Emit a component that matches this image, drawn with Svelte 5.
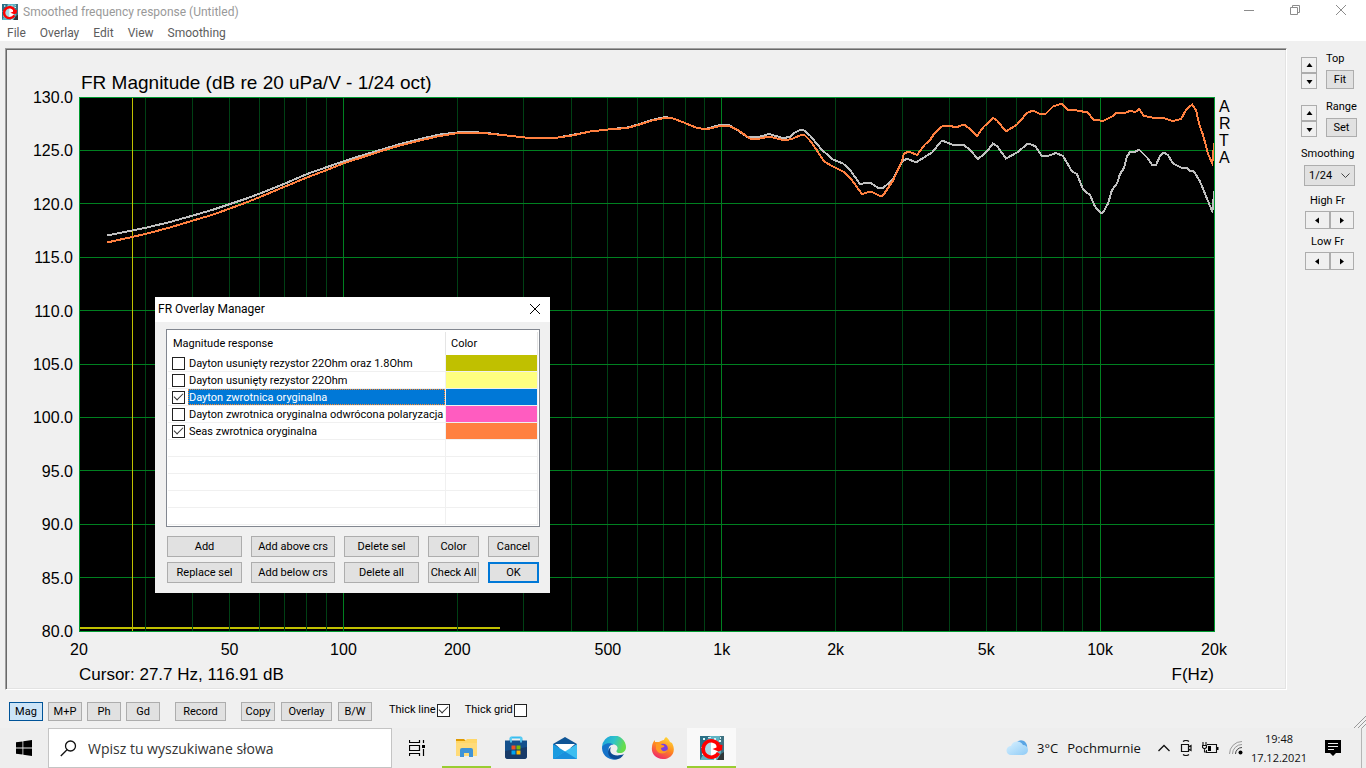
<script>
  const F_MIN = 20;
  const F_MAX = 20000;
  const span = Math.log10(F_MAX / F_MIN);
  const fx = (f) => `${(Math.log10(f / F_MIN) / span) * 100}%`;

  const minorFreqs = [30, 40, 50, 60, 70, 80, 90, 200, 300, 400, 500, 600, 700, 800, 900,
    2000, 3000, 4000, 5000, 6000, 7000, 8000, 9000];
  const majorFreqs = [100, 1000, 10000];
  const levels = [130, 125, 120, 115, 110, 105, 100, 95, 90, 85, 80];
  const ly = (v) => `${((130 - v) / 50) * 100}%`;
  const freqLabels = [[20, '20'], [50, '50'], [100, '100'], [200, '200'], [500, '500'],
    [1000, '1k'], [2000, '2k'], [5000, '5k'], [10000, '10k'], [20000, '20k']];

  const dayton = '107,235.5 132,230.5 147,227.5 170,222 193,215.5 212,210 230,204 245,199 260,193.5 285,183.5 307,174 327,167 343,161.5 360,156 377,151 400,144 420,139 440,134.5 457,132.5 470,132 487,133 507,135.5 525,137.5 540,138 555,138 572,135 590,131.5 608,129.5 627,127.5 638,124.5 652,120 665,117 673,118.5 685,123 697,128 705,129 713,127 721,124.5 730,125.5 738,130.5 747,137 757,137.5 769,134 783,138 790,137 795,132.5 800,130 804,130.5 810,135.5 822,150 833,159.5 843,163.5 850,170 860,184 870,182.5 878,188 883,188 893,179.5 902,161.5 907,158.5 916,162.5 932,152.5 941,141.5 943,141 952,144.5 964,145 970,150 978,159 987,151.5 993,143.5 997,146 1006,158.5 1017,152.5 1028,143.5 1035,146 1042,156 1046,156.5 1056,153 1063,156 1072,171.5 1077,174 1083,189.5 1090,195 1095,206.5 1101,213.5 1103,212.5 1108,203.5 1112,190 1117,183.5 1120,174 1124,168 1127,156.5 1130,152 1135,152 1139,149.5 1148,158.5 1152,165 1156,165 1160,156 1164,152.5 1168,155 1173,163.5 1181,167.5 1187,168 1190,171 1194,171.5 1200,181.5 1207,198.5 1212,211 1213,208 1214,191';
  const seas = '107,242.5 132,237 147,233.5 170,227.5 193,220.5 212,215 230,208.5 245,203 260,197 285,186.5 307,177.5 327,170 343,163.5 360,158 380,151.5 400,145.5 420,140.5 437,136.5 458,133 483,133 507,135.5 530,138 555,138 572,135.5 590,131.5 608,129.5 627,128 638,125 652,120.5 665,118 673,118.5 685,123 697,128 705,129 710,128.5 720,126 730,126.5 737,129.5 750,138.5 760,138.5 769,136.5 785,140.5 793,138.5 802,134.5 805,135.5 810,140.5 817,150.5 824,161.5 833,166.5 843,171.5 850,177.5 862,194 871,191.5 880,196 883,195.5 893,180.5 902,161 904,153.5 909,151.5 917,155 925,144.5 930,140 935,132.5 942,126.5 948,126 957,127 964,124.5 970,129 977,136 983,127.5 993,118 997,120.5 1006,131.5 1017,124.5 1027,113 1033,110.5 1040,114 1046,113.5 1053,106.5 1062,103.5 1068,110 1077,110.5 1088,112.5 1093,119.5 1103,121 1112,116.5 1117,112.5 1125,113 1131,110.5 1135,112.5 1139,109 1144,116 1152,117.5 1163,118 1173,121 1181,119 1186,110 1192,104.5 1196,110 1199,123.5 1203,135 1208,153.5 1212,163 1213,158 1214,143';

  let rows = $state([
    { name: 'Dayton usunięty rezystor 22Ohm oraz 1.8Ohm', color: '#c0c000', on: false },
    { name: 'Dayton usunięty rezystor 22Ohm', color: '#ffff80', on: false },
    { name: 'Dayton zwrotnica oryginalna', color: '#0078d7', on: true },
    { name: 'Dayton zwrotnica oryginalna odwrócona polaryzacja', color: '#ff5cc0', on: false },
    { name: 'Seas zwrotnica oryginalna', color: '#ff8040', on: true }
  ]);
  let selected = $state(2);
  let thickLine = $state(true);
  let thickGrid = $state(false);
  const menus = ['File', 'Overlay', 'Edit', 'View', 'Smoothing'];
  const modes = ['Mag', 'M+P', 'Ph', 'Gd'];
  const actions = ['Add', 'Add above crs', 'Delete sel', 'Color', 'Cancel',
    'Replace sel', 'Add below crs', 'Delete all', 'Check All', 'OK'];
</script>

{#snippet artaIcon(size)}
  <svg width={size} height={size} viewBox="0 0 24 24">
    <rect width="24" height="24" fill="#5fb4c4" />
    <path d="M0 0h10L4 8l2 6-6 10z" fill="#2a6f86" />
    <path d="M20 0h4v24h-6l3-8-2-9z" fill="#3f7382" />
    <path d="M17 24l4-6 3-2v8z" fill="#303638" />
    <path d="M3 2h2v2H3zM8 1h3v1H8zM14 2h2v2h-2zM19 4h2v2h-2zM2 17h2v2H2zM20 1h1v2h-1zM1 11h2v1H1zM14 22h2v2h-2z" fill="#d5f2f6" />
    <circle cx="11" cy="13" r="7" fill="#a9d9e4" />
    <path d="M11 6a7 7 0 0 1 0 14z" fill="#fff" />
    <path d="M18.500 9A8.200 8.200 0 1 0 18.500 17" fill="none" stroke="#f00" stroke-width="3.600" />
    <path d="M22.500 9 22 14l-3.500 1.500L12.500 13l4-1.500V8l3 .5z" fill="#f00" />
  </svg>
{/snippet}

{#snippet arrow(dir)}
  <svg width="7" height="7" viewBox="0 0 7 7" aria-hidden="true">
    {#if dir === 'up'}<path d="M3.500 1 6.500 5h-6z" />
    {:else if dir === 'down'}<path d="M.5 2h6l-3 4z" />
    {:else if dir === 'left'}<path d="M5 .5v6l-4-3z" />
    {:else}<path d="M2 .5v6l4-3z" />{/if}
  </svg>
{/snippet}

<div class="screen">
  <header class="titlebar">
    {@render artaIcon(16)}
    <span class="caption">Smoothed frequency response (Untitled)</span>
    <button class="win" aria-label="Minimize"><svg width="12" height="12" viewBox="0 0 12 12"><path d="M1 6.500h10" /></svg></button>
    <button class="win" aria-label="Restore"><svg width="12" height="12" viewBox="0 0 12 12"><path d="M1.500 3.500h7v7h-7zM3.500 3.500v-2h7v7h-2" /></svg></button>
    <button class="win" aria-label="Close"><svg width="12" height="12" viewBox="0 0 12 12"><path d="M1 1l10 10M11 1 1 11" /></svg></button>
  </header>
  <nav class="menubar">
    {#each menus as m}<button>{m}</button>{/each}
  </nav>

  <main class="workspace">
    <section class="panel">
      <h1>FR Magnitude (dB re 20 uPa/V - 1/24 oct)</h1>
      <svg class="plot">
        <rect width="100%" height="100%" fill="#000" />
        <line x1="0" x2="37.100%" y1="99.400%" y2="99.400%" stroke="#c0c000" stroke-width="2" />
        {#each minorFreqs as f}<line x1={fx(f)} x2={fx(f)} y1="0" y2="100%" stroke="#004014" />{/each}
        {#each majorFreqs as f}<line x1={fx(f)} x2={fx(f)} y1="0" y2="100%" stroke="#008020" />{/each}
        {#each levels as v}<line x1="0" x2="100%" y1={ly(v)} y2={ly(v)} stroke="#008020" />{/each}
        <line x1={fx(27.700)} x2={fx(27.700)} y1="0" y2="100%" stroke="#c0c000" />
        <rect width="100%" height="100%" fill="none" stroke="#009a30" />
        <svg width="100%" height="100%" viewBox="79 97 1135 534" preserveAspectRatio="none">
          <polyline points={dayton} stroke="#c0c0c0" />
          <polyline points={seas} stroke="#ff8040" />
        </svg>
        {#each levels as v}<text x="-6" y={ly(v)} dy="6" text-anchor="end">{v.toFixed(1)}</text>{/each}
        {#each freqLabels as [f, t]}<text x={fx(f)} y="100%" dy="24" text-anchor="middle">{t}</text>{/each}
      </svg>
      <div class="brand"><span>A</span><span>R</span><span>T</span><span>A</span></div>
      <div class="readout"><span>Cursor: 27.7 Hz, 116.91 dB</span><span>F(Hz)</span></div>

      <div class="dialog" role="dialog" aria-label="FR Overlay Manager">
        <div class="dialog-title">
          <span>FR Overlay Manager</span>
          <button aria-label="Close dialog"><svg width="12" height="12" viewBox="0 0 12 12"><path d="M1 1l10 10M11 1 1 11" /></svg></button>
        </div>
        <div class="dialog-body">
          <div class="list">
            <table>
              <thead><tr><th class="name">Magnitude response</th><th>Color</th></tr></thead>
              <tbody>
                {#each rows as row, i}
                  <tr class:selected={i === selected}>
                    <td class="name">
                      <label><input type="checkbox" bind:checked={row.on} /><span>{row.name}</span></label>
                    </td>
                    <td class="swatch"><div style="background:{row.color}"></div></td>
                  </tr>
                {/each}
                {#each Array(5) as _}<tr><td class="name"></td><td></td></tr>{/each}
              </tbody>
            </table>
          </div>
          <div class="actions">
            {#each actions as a}<button class="btn" class:default={a === 'OK'}>{a}</button>{/each}
          </div>
        </div>
      </div>
    </section>

    <aside class="side">
      <div class="group">
        <div class="spin"><button aria-label="Top up">{@render arrow('up')}</button><button aria-label="Top down">{@render arrow('down')}</button></div>
        <div class="stack"><span>Top</span><button class="btn">Fit</button></div>
      </div>
      <div class="group">
        <div class="spin"><button aria-label="Range up">{@render arrow('up')}</button><button aria-label="Range down">{@render arrow('down')}</button></div>
        <div class="stack"><span>Range</span><button class="btn">Set</button></div>
      </div>
      <label class="smooth" for="smoothing">Smoothing</label>
      <div class="combo">
        <select id="smoothing"><option>1/24</option><option>1/12</option><option>1/6</option><option>1/3</option></select>
        <svg width="9" height="6" viewBox="0 0 9 6"><path d="M.5.5l4 4 4-4" /></svg>
      </div>
      <span class="cap">High Fr</span>
      <div class="pair"><button aria-label="High left">{@render arrow('left')}</button><button aria-label="High right">{@render arrow('right')}</button></div>
      <span class="cap">Low Fr</span>
      <div class="pair"><button aria-label="Low left">{@render arrow('left')}</button><button aria-label="Low right">{@render arrow('right')}</button></div>
    </aside>
  </main>

  <div class="toolbar">
    <div class="set">
      {#each modes as m}<button class="btn" class:active={m === 'Mag'}>{m}</button>{/each}
    </div>
    <button class="btn wide">Record</button>
    <div class="set second">
      <button class="btn">Copy</button><button class="btn wide">Overlay</button><button class="btn">B/W</button>
    </div>
    <label>Thick line <input type="checkbox" bind:checked={thickLine} /></label>
    <label>Thick grid <input type="checkbox" bind:checked={thickGrid} /></label>
    <svg class="grip" width="12" height="12" viewBox="0 0 12 12"><path d="M0 12 12 0M4 12l8-8M8 12l4-4" /></svg>
  </div>

  <footer class="taskbar">
    <button class="start" aria-label="Start">
      <svg width="16" height="16" viewBox="0 0 16 16"><path d="M0 2.300 6.500 1.400v6.200H0zM7.300 1.300 16 0v7.600H7.300zM0 8.400h6.500v6.200L0 13.700zM7.300 8.400H16V16l-8.700-1.300z" /></svg>
    </button>
    <div class="search">
      <svg width="17" height="17" viewBox="0 0 17 17"><circle cx="10.500" cy="6" r="5" fill="none" stroke="#111" stroke-width="1.300" /><path d="M7 9.800.800 16" stroke="#111" stroke-width="1.300" /></svg>
      <input type="text" placeholder="Wpisz tu wyszukiwane słowa" aria-label="Wpisz tu wyszukiwane słowa" />
    </div>
    <div class="apps">
      <button class="view" aria-label="Task view">
        <svg width="17" height="16" viewBox="0 0 17 16"><path d="M.5 0v2.500h10V0M.5 16v-2.500h10V16M.5 5.500h10v5H.5zM14.500 0v3M14.500 9v7" fill="none" stroke="#000" stroke-width="1.200" /><path d="M13 5h3v3h-3z" /></svg>
      </button>
      <button class="open" aria-label="Explorer">
        <svg width="22" height="20" viewBox="0 0 22 20"><path d="M0 1h8l2 2H0z" fill="#e09a00" /><path d="M0 3h9l2-2h10v17H0z" fill="#ffd768" /><path d="M0 5h21v13H0z" fill="#ffe08a" opacity=".5" /><path d="M4 19v-7q0-2 2-2h9q2 0 2 2v7h-4v-4H8v4z" fill="#3f93d6" /></svg>
      </button>
      <button aria-label="Store">
        <svg width="24" height="24" viewBox="0 0 24 24"><path d="M6.500 7V2.500q0-1 1-1h9q1 0 1 1V7" fill="none" stroke="#38bdf0" stroke-width="2" /><path d="M1 4.500h22V20q0 3-3 3H4q-3 0-3-3z" fill="#14508c" /><path d="M1 15l22-4v9q0 3-3 3H4q-3 0-3-3z" fill="#173a68" /><path d="M7 1v5.500M17 1v5.500" stroke="#5cd0f5" stroke-width="1.600" /><path d="M7.500 9.500h4v4h-4z" fill="#f25022" /><path d="M12.500 9.500h4v4h-4z" fill="#7fba00" /><path d="M7.500 14.500h4v4h-4z" fill="#00a4ef" /><path d="M12.500 14.500h4v4h-4z" fill="#ffb900" /></svg>
      </button>
      <button aria-label="Mail">
        <svg width="24" height="24" viewBox="0 0 24 24"><path d="M0 8 12 1l12 7v4H0z" fill="#0f5596" /><path d="M2 8h20l-8 7h-4z" fill="#fff" /><path d="M0 8l12 7.500V23H0z" fill="#1a9be0" /><path d="M24 8 0 23h24z" fill="#3dbef0" /><path d="M12 15.500 0 23h24z" fill="#1a8fdc" /></svg>
      </button>
      <button aria-label="Edge">
        <svg width="24" height="24" viewBox="0 0 24 24">
          <defs><linearGradient id="edge" x1="0" y1="0" x2="1" y2=".3"><stop offset="0" stop-color="#1b9de0" /><stop offset=".55" stop-color="#2fc3c9" /><stop offset="1" stop-color="#66dd4b" /></linearGradient></defs>
          <path d="M0 12A12 12 0 0 1 24 11c0 4-3 6-6 6-4 0-4-2-3-3 2-4-2-6-6-6-5 0-9 2-9 6z" fill="url(#edge)" />
          <path d="M0 12c1-5 9-6 12-3-5-1-6 4-5 7 1 4 5 7 9 7A12 12 0 0 1 0 12z" fill="#1673c9" />
          <path d="M9 11c-3 6 3 11 13 7-3 5-7 6-10 5-6-1-8-9-3-12z" fill="#0c4a94" />
        </svg>
      </button>
      <button aria-label="Firefox">
        <svg width="24" height="24" viewBox="0 0 24 24">
          <defs><linearGradient id="fox" x1=".8" y1="0" x2=".3" y2="1"><stop offset="0" stop-color="#ffe03a" /><stop offset=".5" stop-color="#ff8a1f" /><stop offset="1" stop-color="#f0246b" /></linearGradient></defs>
          <path d="M15 1c2 1 3 3 4 5l2 1c5 9-1 16-9 16S0 17 1 11c0-3 1-5 3-7v2c1 0 2 0 4 0 2-1 3-2 5-2 0-1 1-2 2-3z" fill="url(#fox)" />
          <circle cx="12" cy="12.500" r="4.800" fill="#7a3fe0" />
          <path d="M5 8c3-1 5 0 6 1 2 0 3 1 2 2l-3 1c0 4 5 4 7 1-1 6-10 6-12 0z" fill="#ff9a22" />
        </svg>
      </button>
      <button class="open current" aria-label="ARTA">{@render artaIcon(24)}</button>
    </div>
    <div class="tray">
      <button class="weather">
        <svg width="22" height="16" viewBox="0 0 22 16"><defs><linearGradient id="cloud" x1="0" y1="0" x2="1" y2="1"><stop offset="0" stop-color="#d9f1ff" /><stop offset="1" stop-color="#8fcbf6" /></linearGradient></defs><path d="M10 3q3-4 8-2 4 3 3 8l-4 3z" fill="#5aa5e4" /><path d="M5 15a4.500 4.500 0 0 1 0-9 6.500 6.500 0 0 1 12-1 5 5 0 0 1 0 10z" fill="url(#cloud)" /></svg>
        <span>3°C</span><span>Pochmurnie</span>
      </button>
      <button aria-label="Show hidden icons"><svg width="12" height="8" viewBox="0 0 12 8"><path d="M.5 7 6 1.500 11.500 7" fill="none" stroke="#111" stroke-width="1.300" /></svg></button>
      <button aria-label="Meet now"><svg width="12" height="16" viewBox="0 0 12 16"><path d="M3 1.500q3-2 6 0M3 14.500q3 2 6 0M1.500 4.500h7v7h-7zM8.500 7l2.500-1.500v5L8.500 9" fill="none" stroke="#111" stroke-width="1.200" /></svg></button>
      <button aria-label="Battery"><svg width="17" height="13" viewBox="0 0 17 13"><path d="M5 2.500h9.500v8H4.500V8M1 0v3M4 0v3M.5 3.500h4v2l-2 1.500-2-1.500zM2.500 7v3H5" fill="none" stroke="#111" stroke-width="1.100" /><path d="M6 4h3v5H6zM15 5h1.500v3H15z" /></svg></button>
      <button aria-label="Network"><svg width="14" height="14" viewBox="0 0 14 14"><g fill="none" stroke="#999"><path d="M.5 13A12.500 12.500 0 0 1 13 .500" /><path d="M3.500 13A9.500 9.500 0 0 1 13 3.500" /></g><path d="M6.500 13A6.500 6.500 0 0 1 13 6.500" fill="none" stroke="#444" /><circle cx="11.500" cy="11.500" r="2" /></svg></button>
      <button class="clock"><span>19:48</span><span>17.12.2021</span></button>
      <button class="notes" aria-label="Notifications"><svg width="16" height="16" viewBox="0 0 16 16"><path d="M0 0h16v13h-5l-3 3-3-3H0z" /><path d="M3 3.500h10M3 6.500h10M3 9.500h6" stroke="#eee" /></svg></button>
    </div>
  </footer>
</div>

<style>
  :global(body) { margin: 0; }
  .screen {
    --ui: Roboto, sans-serif;
    --shell: "Open Sans", sans-serif;
    display: flex; flex-direction: column; min-height: 100vh;
    background: #f0f0f0; color: #000; font: 11px/14px var(--ui);
  }
  button { font: inherit; color: inherit; padding: 0; margin: 0; border: 0; background: none; }
  svg { display: block; flex: none; }

  .titlebar { display: flex; align-items: center; height: 23px; padding: 0 2px; background: #fff; font: 12px/16px var(--ui); color: #999; }
  .caption { flex: 1; padding-left: 5px; }
  .win { width: 46px; height: 20px; display: grid; place-items: center; align-self: flex-start; }
  .win path { fill: none; stroke: #8c8c8c; }
  .menubar { display: flex; gap: 14px; box-sizing: border-box; height: 18px; padding: 2px 0 0 7px; background: #fff; font: 12px/16px var(--ui); color: #5c5c5c; align-items: center; }

  .workspace { flex: 1; display: flex; padding: 7px 0 0 5px; }
  .panel {
    position: relative; flex: 1; box-sizing: border-box; padding: 1px;
    display: grid; grid-template: 47px minmax(300px, 1fr) 57px / 72px 1fr 71px;
    border: 1px solid; border-color: #a0a0a0 #fff #fff #a0a0a0;
    box-shadow: inset 1px 1px #696969, inset -1px -1px #e3e3e3;
    font: 16px/17px "Liberation Sans", sans-serif;
  }
  h1 { grid-column: 2 / 4; margin: 0; padding: 22px 0 0 2px; font-size: 19px; line-height: 22px; font-weight: 400; }
  .plot { grid-column: 2; width: 100%; height: 100%; overflow: visible; shape-rendering: crispEdges; }
  .plot polyline { fill: none; stroke-width: 2; vector-effect: non-scaling-stroke; }
  .brand { display: flex; flex-direction: column; padding: 1px 0 0 5px; }
  .readout { grid-column: 2; display: flex; justify-content: space-between; align-items: flex-end; padding-bottom: 5px; font-size: 17px; }

  .dialog { position: absolute; left: 149px; top: 248px; width: 395px; background: #f0f0f0; font: 11px/14px var(--ui); }
  .dialog-title { display: flex; justify-content: space-between; align-items: center; box-sizing: border-box; height: 25px; padding: 0 9px 1px 3px; background: #fff; font: 12px/16px var(--ui); }
  .dialog-title path { stroke: #000; }
  .dialog-body { padding: 7px 10px 10px 11px; }
  .list { border: 1px solid #828790; padding: 2px 1px 1px; background: #fff; }
  table { width: 100%; border-collapse: separate; border-spacing: 0; table-layout: fixed; }
  th { height: 23px; padding: 0 0 0 5px; text-align: left; font-weight: 400; border-right: 1px solid #e5e5e5; }
  th.name { width: 272px; }
  td { height: 16px; padding: 0; border-bottom: 1px solid #f0f0f0; border-right: 1px solid #f0f0f0; white-space: nowrap; }
  td label { display: flex; align-items: center; gap: 3px; padding-left: 4px; }
  td label span { flex: 1; line-height: 18px; height: 16px; padding-left: 1px; }
  .swatch div { height: 16px; }
  .selected label span { background: #0078d7; color: #fff; outline: 1px dotted #ff8728; outline-offset: -1px; }
  input[type='checkbox'] { appearance: none; flex: none; box-sizing: border-box; width: 13px; height: 13px; margin: 0; border: 1px solid #222; background: #fff; }
  input[type='checkbox']:checked::after { content: ''; display: block; width: 8px; height: 4px; margin: 1px 0 0 1px; border: solid #333; border-width: 0 0 1px 1px; transform: rotate(-45deg); }
  .actions { display: grid; grid-template-columns: 75fr 84fr 75fr 51fr 51fr; gap: 5px 9px; padding: 9px 1px 0 1px; }
  .actions .btn { height: 21px; }
  .btn { box-sizing: border-box; height: 19px; padding-top: 1px; border: 1px solid #adadad; background: #e1e1e1; white-space: nowrap; }
  .btn.default { border: 2px solid #0078d7; }
  .btn.active { border-color: #005499; background: #cce4f7; }

  .side { width: 79px; box-sizing: border-box; padding: 9px 12px 0 14px; display: flex; flex-direction: column; }
  .group { display: flex; gap: 9px; margin-bottom: 16px; }
  .group + .group { margin-bottom: 10px; }
  .spin { display: flex; flex-direction: column; }
  .spin button { width: 16px; height: 16px; }
  .spin button, .pair button { display: grid; place-items: center; box-sizing: border-box; border: 1px solid #adadad; background: #f0f0f0; }
  .stack { flex: 1; display: flex; flex-direction: column; gap: 4px; margin-top: -5px; }
  .smooth, .cap { text-align: center; white-space: nowrap; }
  .combo { display: flex; align-items: center; margin: 4px 0 8px 3px; }
  select { appearance: none; width: 51px; height: 21px; box-sizing: border-box; border: 1px solid #adadad; border-radius: 0; background: #e1e1e1; font: inherit; color: inherit; padding: 0 4px; }
  .combo svg { margin-left: -14px; pointer-events: none; }
  .combo path { fill: none; stroke: #444; }
  .pair { display: flex; margin: 3px 0 6px 4px; }
  .pair button { width: 25px; height: 18px; }

  .toolbar { display: flex; align-items: center; box-sizing: border-box; height: 38px; padding: 4px 0 0 9px; }
  .set { display: flex; gap: 5px; margin-right: 15px; }
  .set .btn { width: 34px; }
  .btn.wide, .set .wide { width: 51px; }
  .set.second { gap: 6px; margin: 0 17px 0 15px; }
  .toolbar label { display: flex; align-items: center; gap: 1px; margin-right: 15px; padding-bottom: 2px; }
  .grip { margin-left: auto; align-self: flex-end; }
  .grip path { stroke: #999; }

  .taskbar { display: flex; height: 40px; background: #eee; font: 14px/19px var(--shell); color: #111; }
  .start { width: 48px; display: grid; place-items: center; }
  .search { flex: 0 1 344px; box-sizing: border-box; display: flex; align-items: center; gap: 11px; padding-left: 11px; border: 1px solid #c4c4c4; background: #fff; }
  .search input { flex: 1; min-width: 0; border: 0; padding: 0; background: none; font: inherit; outline: none; }
  .search input::placeholder { color: #333; opacity: 1; }
  .apps { display: flex; }
  .apps button { width: 49px; display: grid; place-items: center; box-sizing: border-box; }
  .apps .view { width: 50px; }
  .open { box-shadow: inset 0 -2px #9acd32; }
  .current { background: #f9f9f9; }
  .tray { margin-left: auto; display: flex; align-items: center; gap: 10px; padding-right: 4px; }
  .weather { display: flex; align-items: center; gap: 9px; margin-right: 7px; font-size: 13px; }
  .clock { display: flex; flex-direction: column; align-items: center; margin-left: -2px; font-size: 11px; }
  .notes { align-self: stretch; padding: 0 20px 0 8px; border-right: 1px solid #b5b5b5; }
</style>
